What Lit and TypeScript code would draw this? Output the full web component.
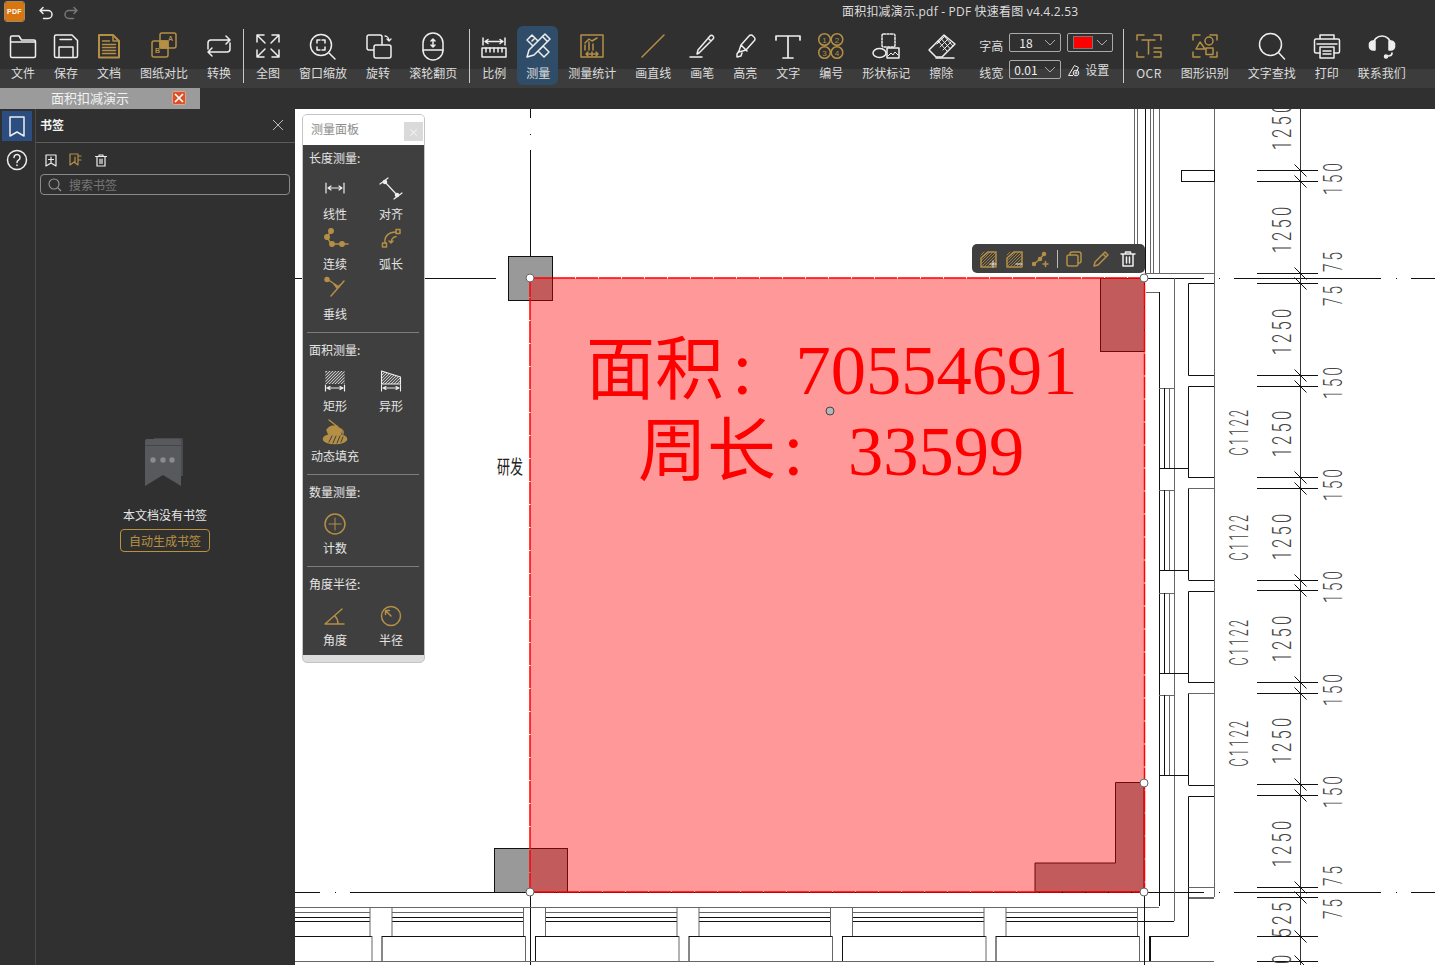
import { LitElement, html, svg, css } from "lit";
import { customElement } from "lit/decorators.js";

const ic = (content: unknown, cls = "w", size = 32) =>
  html`<svg class="ico ${cls}" width=${size} height=${size} viewBox="0 0 ${size} ${size}" fill="none" stroke="currentColor" stroke-width="1.5" stroke-linecap="round" stroke-linejoin="round">${content}</svg>`;

const hatch = (x: number, y: number, w: number, h: number, step = 3) => {
  const out: string[] = [];
  for (let i = step; i < w + h; i += step) {
    const x1 = x + Math.max(0, i - h), y1 = y + Math.min(i, h);
    const x2 = x + Math.min(i, w), y2 = y + Math.max(0, i - w);
    out.push(`M${x1} ${y1}L${x2} ${y2}`);
  }
  return out.join("");
};

const I = {
  folder: svg`<path d="M5 6h7l2.500 4H27a1.500 1.500 0 0 1 1.500 1.500V26a1.500 1.500 0 0 1-1.500 1.500H5A1.500 1.500 0 0 1 3.500 26V7.500A1.500 1.500 0 0 1 5 6zM3.500 12H28.500"/>`,
  save: svg`<path d="M6 5h16l5.500 5.500V26a1.500 1.500 0 0 1-1.500 1.500H6A1.500 1.500 0 0 1 4.500 26V6.500A1.500 1.500 0 0 1 6 5zM10 9.500h11.500M9 27V17h14v10"/>`,
  doc: svg`<path stroke-width="2" d="M6 5h14l6 6v16.500H6z"/><path d="M20 5v6h6M9.500 11h7M9.500 14.500h13M9.500 17.500h13M9.500 20.500h13M9.500 23.500h13"/>`,
  compare: svg`<rect x="12" y="3" width="16" height="15" rx="2"/><rect x="4" y="11" width="16" height="16" rx="2"/><rect x="12" y="11" width="8" height="7" fill="currentColor"/><text x="20" y="11" class="mini">A</text><text x="7" y="23" class="mini">B</text>`,
  convert: svg`<path d="M5 19v-6a3 3 0 0 1 3-3h19M23 6l4 4-4 4M27 13v6a3 3 0 0 1-3 3H5M9 18l-4 4 4 4"/>`,
  full: svg`<path d="M5 12V5h7M5 5l8 8M27 12V5h-7M27 5l-8 8M5 20v7h7M5 27l8-8M27 20v7h-7M27 27l-8-8"/>`,
  zoomWin: svg`<circle cx="14" cy="15" r="10.500"/><path d="M22 23l6 6M10 13v-3h3M15 10h3v3M18 17v3h-3M13 20h-3v-3"/>`,
  rotate: svg`<rect x="5" y="5" width="15" height="15" rx="2"/><rect x="12" y="15" width="17" height="13" rx="2" fill="#303030"/><path d="M23 6c2 0 4 2 4 5M25 9l2 2 2-2" stroke-width="1.300"/>`,
  wheel: svg`<rect x="6" y="3" width="20" height="27" rx="10"/><path d="M6 20h20M16 9v8M14 11l2-2 2 2M14 15l2 2 2-2"/>`,
  scale: svg`<path d="M5 8v7M27 8v7M7 11.500h18M10 9.500l-3 2 3 2M22 9.500l3 2-3 2"/><rect x="4" y="18" width="24" height="9"/><path d="M8 18v4M12 18v4M16 18v4M20 18v4M24 18v4" />`,
  measure: svg`<path d="M5 10l5-5 17 17-5 5zM10 11l2-2M14 15l2-2M18 19l2-2"/><path fill="#2f4d68" d="M23 4l5 5-16 16-7 2 2-7z"/><path d="M20.500 6.500l5 5"/>`,
  stats: svg`<rect x="5" y="5" width="22" height="22"/><path d="M9 15v5M13 12v8M17 14v6M9 13l4-4 3 2 5-3M10 24h12M12 22l-2 2 2 2M20 22l2 2-2 2M16 22v4"/>`,
  line: svg`<path d="M5 27L27 5"/>`,
  pen: svg`<path d="M13 23l-2 1 1-4L24 6a2 2 0 0 1 3 0v0a2 2 0 0 1 0 3zM22 8l3 3M4 27h12"/>`,
  hl: svg`<path d="M10 21l2-6 8-9a2.500 2.500 0 0 1 4 0l1 1a2.500 2.500 0 0 1 0 4l-8 9-7 2zM12 15l6 6M10 21l-2 3v3l4-1 1-3"/>`,
  text: svg`<path d="M4 10V6h24v4M16 6v22M11 28h10" stroke-width="1.700"/>`,
  number: svg`<circle cx="9.500" cy="9.500" r="5.800"/><circle cx="22" cy="9.500" r="5.800"/><circle cx="9.500" cy="22.500" r="5.800"/><circle cx="22" cy="22.500" r="5.800"/><text class="dg" x="9.500" y="12.500">1</text><text class="dg" x="22" y="12.500">2</text><text class="dg" x="9.500" y="25.500">3</text><text class="dg" x="22" y="25.500">4</text>`,
  shape: svg`<rect x="12" y="4" width="13" height="13" rx="1.500" stroke-dasharray="2 1.500"/><ellipse cx="9.500" cy="23" rx="6.500" ry="4.500"/><rect x="17" y="18" width="12" height="10"/><path d="M18 26l3-3 2 2 2-3 3 3" stroke-width="1"/>`,
  eraser: svg`<path d="M4 20L19 5l11 9-13 13H11z"/><path d="M13 11l9 10M16 8.500l9 10M19 6l9 10M12 14l8-8M15 17l8-8M18 20l8-8" stroke-width="1"/><path d="M11 28h18"/>`,
  ocr: svg`<path d="M4 10V5h7M21 5h7v5M4 22v5h7M21 27h7v-5M9 10h13M15.500 10v14M21 18h7M21 22h7"/>`,
  recog: svg`<path d="M4 10V5h7M21 5h7v5M4 22v5h7M21 27h7v-5"/><circle cx="20" cy="11" r="4"/><path d="M11 12l5 7H7z"/><rect x="17" y="18" width="7" height="6.500"/>`,
  search: svg`<circle cx="14.500" cy="14.500" r="11"/><path d="M22.500 22.500l6 6.500"/>`,
  print: svg`<path d="M9 9V5h14v4M9 23H5a1.500 1.500 0 0 1-1.500-1.500v-11A1.500 1.500 0 0 1 5 9h22a1.500 1.500 0 0 1 1.500 1.500v11A1.500 1.500 0 0 1 27 23h-4"/><rect x="9" y="17" width="14" height="11"/><path d="M6 14h20M12 21h8M12 24h8"/>`,
  headset: svg`<path d="M7 15a9 9 0 0 1 18 0M22 26c2 0 4-1 4-3" stroke-width="1.700"/><path d="M9 11v9H7a3.500 3.500 0 0 1-3.500-4.500A3.500 3.500 0 0 1 7 11zM23 11v9h2a3.500 3.500 0 0 0 3.500-4.500A3.500 3.500 0 0 0 25 11z" fill="currentColor"/><circle cx="20" cy="26.500" r="1.500" fill="currentColor"/>`,
  linear: svg`<path d="M5 7v10M23 7v10M7 12h14M10 10l-3 2 3 2M18 10l3 2-3 2" stroke-width="1.200"/>`,
  aligned: svg`<path d="M3 8l8-6M17 23l8-6M7 5l14 15" stroke-width="1.200"/><circle cx="8" cy="6" r="1.500" fill="currentColor"/><circle cx="20" cy="19" r="1.500" fill="currentColor"/>`,
  chain: svg`<path d="M10 5L6 11l4 7 9 0 8 0"/><circle cx="10" cy="5" r="2.200" fill="currentColor"/><circle cx="6" cy="11" r="2.200" fill="currentColor"/><circle cx="11" cy="18" r="2.200" fill="currentColor"/><circle cx="21" cy="18" r="2.200" fill="currentColor"/>`,
  arc: svg`<path d="M8 17C7 10 12 6 19 6M14 17c0-3 2-6 5-6.500M12 15l2 2 2-2"/><rect x="5.500" y="17" width="4" height="4"/><rect x="19" y="3.500" width="4" height="4"/>`,
  perp: svg`<path d="M6 3l12 8M23 5L10 20M13 8l3 4 3-3"/><circle cx="6" cy="3.500" r="2" fill="currentColor"/>`,
  rectA: svg`<rect x="4.500" y="3" width="19" height="13" fill="#ddd" stroke="none"/><path d="${hatch(4.5, 3, 19, 13)}" stroke="#3f3f3f" stroke-width="1.200"/><path d="M4.500 17v6M23.500 17v6M6 20h16M9 18.500l-3 1.500 3 1.500M19 18.500l3 1.500-3 1.500" stroke-width="1.200"/>`,
  irregular: svg`<path d="M4.500 3l19 6v7h-19z" fill="#ddd" stroke="none"/><path d="${hatch(4.5, 3, 19, 13)}" stroke="#3f3f3f" stroke-width="1.200"/><path d="M4.500 3l19 6v7h-19zM4.500 17v6M23.500 17v6M6 20h16M9 18.500l-3 1.500 3 1.500M19 18.500l3 1.500-3 1.500" stroke-width="1.100"/>`,
  fill: svg`<path d="M8 2l9 7M6 12c2-3 5-4 8-4l7 4-2 5H8z" fill="currentColor"/><path d="M22 13v3" /><ellipse cx="14" cy="21" rx="11.500" ry="4.500" fill="currentColor"/><path d="M8 24l3-6M12 25l3-7M16 25l3-7M20 24l2-5" stroke="#3f3f3f" stroke-width="1"/>`,
  count: svg`<circle cx="14" cy="14" r="10"/><path d="M14 8v12M8 14h12" stroke-width="1"/>`,
  angle: svg`<path d="M4 22h19M4 22L21 7M14 14c2 2 3 5 3 8"/>`,
  radius: svg`<circle cx="14" cy="14" r="9.500"/><path d="M14 14L8.500 8.500M8.500 12.500v-4h4"/>`,
};

type Item = { l: string; i: unknown; g?: boolean; a?: boolean };
const G1: Item[] = [
  { l: "文件", i: I.folder }, { l: "保存", i: I.save }, { l: "文档", i: I.doc, g: true },
  { l: "图纸对比", i: I.compare, g: true }, { l: "转换", i: I.convert },
];
const G2: Item[] = [
  { l: "全图", i: I.full }, { l: "窗口缩放", i: I.zoomWin }, { l: "旋转", i: I.rotate }, { l: "滚轮翻页", i: I.wheel },
];
const G3: Item[] = [
  { l: "比例", i: I.scale }, { l: "测量", i: I.measure, a: true }, { l: "测量统计", i: I.stats, g: true },
  { l: "画直线", i: I.line, g: true }, { l: "画笔", i: I.pen }, { l: "高亮", i: I.hl }, { l: "文字", i: I.text },
  { l: "编号", i: I.number, g: true }, { l: "形状标记", i: I.shape }, { l: "擦除", i: I.eraser },
];
const G4: Item[] = [
  { l: "OCR", i: I.ocr, g: true }, { l: "图形识别", i: I.recog, g: true }, { l: "文字查找", i: I.search },
  { l: "打印", i: I.print }, { l: "联系我们", i: I.headset },
];

type Tool = { l: string; i: unknown; g?: boolean };
const PANEL: { h: string; items: Tool[] }[] = [
  { h: "长度测量:", items: [{ l: "线性", i: I.linear }, { l: "对齐", i: I.aligned }, { l: "连续", i: I.chain, g: true }, { l: "弧长", i: I.arc, g: true }, { l: "垂线", i: I.perp, g: true }] },
  { h: "面积测量:", items: [{ l: "矩形", i: I.rectA }, { l: "异形", i: I.irregular }, { l: "动态填充", i: I.fill, g: true }] },
  { h: "数量测量:", items: [{ l: "计数", i: I.count, g: true }] },
  { h: "角度半径:", items: [{ l: "角度", i: I.angle, g: true }, { l: "半径", i: I.radius, g: true }] },
];

@customElement("cad-sheet")
class CadSheet extends LitElement {
  static styles = css`
    :host { display: block; width: 100%; height: 100%; background: #fff; overflow: hidden; }
    svg { display: block; }
    .cad { font-family: "Roboto", "Liberation Sans", sans-serif; font-weight: 300; font-size: 26px; fill: #444; text-anchor: middle; letter-spacing: 5px; }
    .big { font-family: "Liberation Serif", "Noto Sans CJK SC", serif; font-size: 70.500px; fill: #ff0000; }
    .big .cj { font-size: 69px; }
    .big .co { font-size: 75px; }
    .lab { font-family: "Noto Sans CJK SC", sans-serif; font-size: 13px; fill: #222; }
  `;
  render() {
    const K = "#111", M = "#666";
    const L = (x1: number, y1: number, x2: number, y2: number, c = K) =>
      svg`<line x1=${x1} y1=${y1} x2=${x2} y2=${y2} stroke=${c} stroke-width="1"/>`;
    const P = 102.4;
    const lines: unknown[] = [];
    // dash-dot axes
    lines.push(L(530.5, 109, 530.5, 118), L(530.5, 134, 530.5, 135), L(530.5, 150, 530.5, 278));
    lines.push(L(530.5, 892, 530.5, 965));
    lines.push(L(295, 278.5, 496, 278.5), L(511, 278.5, 512, 278.5));
    lines.push(L(295, 892.5, 320, 892.5), L(335, 892.5, 336, 892.5), L(350, 892.5, 1144, 892.5));
    for (const y of [278.5, 892.5]) {
      lines.push(L(1147, y, 1204, y), L(1219, y, 1220, y), L(1234, y, 1381, y), L(1396, y, 1397, y), L(1411, y, 1435, y));
    }
    // upper wall
    lines.push(L(1134.5, 109, 1134.5, 273, M), L(1137.5, 109, 1137.5, 273, M), L(1145.5, 109, 1145.5, 278), L(1150.5, 109, 1150.5, 273, M), L(1153.5, 109, 1153.5, 273, M), L(1159.5, 109, 1159.5, 273, M));
    lines.push(L(1145, 273.5, 1214, 273.5, M), L(1214.5, 109, 1214.5, 897, M));
    lines.push(svg`<rect x="1181.5" y="170.500" width="33" height="11" fill="#fff" stroke=${K}/>`);
    // right wall column
    lines.push(L(1146, 292.5, 1159, 292.5, M), L(1159.5, 292, 1159.5, 906, K), L(1174.5, 278, 1174.5, 921, M));
    lines.push(L(1188.5, 283.5, 1188.5, 375.5), L(1188.5, 283.5, 1214, 283.5));
    for (let i = 0; i < 6; i++) {
      const y0 = Math.round(375 + P * i) + 0.5;
      lines.push(L(1188.5, y0, 1214, y0), L(1188.5, y0 + 11, 1214, y0 + 11, i % 2 ? M : K));
      if (i < 5) lines.push(L(1188.5, y0 + 11, 1188.5, y0 + P));
      else lines.push(L(1188.5, y0 + 11, 1188.5, 887.5), L(1188.5, 887.5, 1214, 887.5, M));
    }
    for (let i = 0; i < 4; i++) {
      const y0 = Math.round(375 + P * i);
      lines.push(L(1159, y0 + 13.5, 1174, y0 + 13.5, M), L(1159, y0 + 93.5, 1188, y0 + 93.5), L(1164.5, y0 + 13, 1164.5, y0 + 93), L(1169.5, y0 + 13, 1169.5, y0 + 93, M));
    }
    // bottom wall
    lines.push(L(1188.5, 897.5, 1214, 897.5, M), L(1188.5, 897, 1188.5, 936.5), L(1150, 936.5, 1188, 936.5), L(1150.5, 936, 1150.5, 961), L(295, 961.5, 1214, 961.5, M));
    lines.push(L(295, 907.5, 1159, 907.5, M), L(1144.5, 892, 1144.5, 965));
    const cols = [370, 523.5, 677, 830.5, 984, 1137.5];
    const segs: [number, number][] = [[295, 370], [392, 523.5], [545.5, 677], [699, 830.5], [852.5, 984], [1006, 1137.5]];
    for (const [a, b] of segs) {
      lines.push(L(a, 912.5, b, 912.5, M), L(a, 917.5, b, 917.5));
      lines.push(L(a, 921.5, b === 1137.5 ? 1174 : b, 921.5));
    }
    let prev = 295;
    for (const c of cols) {
      lines.push(L(prev, 936.5, c + 2, 936.5));
      prev = c + 12;
      lines.push(L(c, 907, c, 936, M), L(c + 2, 936, c + 2, 961, M), L(c + 12, 936, c + 12, 961));
      if (c < 1137) lines.push(L(c + 22, 907, c + 22, 936, M));
    }
    // dimension chain
    lines.push(L(1300.5, 109, 1300.5, 965, "#333"));
    const ticks = [170.5, 181.5, 273.5, 283.5, 375.5, 386.5, 477.5, 488.5, 580.5, 590.5, 682.5, 693.5, 784.5, 795.5, 887.5, 897.5, 936.5, 961.5];
    for (const y of ticks) {
      lines.push(L(1257, y, 1318, y), L(1294.5, y - 6, 1306.5, y + 6));
    }
    const T = (t: string, x: number, y: number, sx: number) =>
      svg`<text class="cad" transform="translate(${x} ${y - 1.5}) rotate(-90) scale(${sx} 1)">${t}</text>`;
    const labels = [
      ...[127, 230, 332, 434, 537, 639, 741, 844, 978].map((y) => T("1250", 1291, y, 0.64)),
      T("525", 1291, 920, 0.66),
      ...[179, 383, 485, 587, 690, 792].map((y) => T("150", 1342, y, 0.6)),
      ...[262, 296, 876, 909].map((y) => T("75", 1342, y, 0.59)),
      ...[433, 538, 643, 744].map((y) => T("C1122", 1248, y, 0.48)),
    ];
    const handles: [number, number][] = [[530, 278], [1144, 278], [1144, 783], [1144, 892], [530, 892]];
    return html`<svg width="1140" height="856" viewBox="295 109 1140 856">
      ${lines}
      ${labels}
      <text class="lab" transform="translate(497 474) scale(1 1.500)">研发</text>
      <rect x="508.500" y="256.500" width="44" height="44" fill="#999" stroke="#111"/>
      <rect x="494.500" y="848.500" width="73" height="44" fill="#999" stroke="#111"/>
      <rect x="1100.500" y="278.500" width="44" height="73" fill="#999" stroke="#111"/>
      <path d="M1115.500 782.500H1144V892H1035V863H1115.500z" fill="#999" stroke="#111"/>
      <rect x="530" y="278" width="614.500" height="614" fill="#ff0000" fill-opacity="0.4"/>
      <rect x="530" y="278" width="614.500" height="614" fill="none" stroke="#ff0000" stroke-width="1.500" stroke-dasharray="22 1"/>
      <text class="big" y="394"><tspan class="cj" x="586">面积</tspan><tspan class="co" x="732">:</tspan><tspan x="795.500">70554691</tspan></text>
      <text class="big" y="475"><tspan class="cj" x="638">周长</tspan><tspan class="co" x="783">:</tspan><tspan x="848">33599</tspan></text>
      ${handles.map(([x, y]) => svg`<circle cx=${x} cy=${y} r="4" fill="#fff" stroke="#666" stroke-width="1"/>`)}
      <circle cx="830" cy="411" r="4" fill="#b5b5b5" stroke="#444" stroke-width="1"/>
    </svg>`;
  }
}

@customElement("app-root")
export class AppRoot extends LitElement {
  static styles = css`
    :host { display: block; width: 100%; height: 100vh; overflow: hidden; background: #303030; color: #ddd;
      font-family: "Noto Sans CJK SC", "Liberation Sans", sans-serif; font-size: 12px; }
    .app { display: flex; flex-direction: column; height: 100%; }
    .ico { display: block; flex: none; }
    .w { color: #eeeeee; }
    .g { color: #b48f45; }
    .mini { font: bold 7px "Liberation Sans", sans-serif; fill: currentColor; stroke: none; }
    .dg { font: 8px "Liberation Sans", sans-serif; fill: currentColor; stroke: none; text-anchor: middle; }

    .title { height: 27px; display: flex; align-items: center; flex: none; position: relative; z-index: 1; }
    .logo { margin-left: 5px; width: 19px; height: 19px; border-radius: 2px; background: #d9750f; outline: 1px solid #9a8a70;
      color: #fff; font: bold 7px "Liberation Sans", sans-serif; display: flex; align-items: center; justify-content: center; letter-spacing: 0.300px; margin-top: -4px; }
    .undo { margin-left: 15px; margin-top: -2px; }
    .redo { margin-left: 11px; margin-top: -2px; color: #777; }
    .ttl { margin-left: 764px; margin-top: -3px; color: #ddd; font-family: "Open Sans", "Noto Sans CJK SC", sans-serif; font-size: 12px; line-height: 16px; letter-spacing: 0.200px; white-space: nowrap; }

    .bar { height: 61px; flex: none; display: flex; padding-left: 11px; background: linear-gradient(#303030 0 42px, #3c3c3c 42px); }
    .grp { display: flex; gap: 19px; }
    .sep { width: 1px; height: 54px; margin: 2px 12px 0; background: #c8c8c8; flex: none; }
    .sep.tight { margin-left: 10px; }
    .it { position: relative; display: flex; flex-direction: column; align-items: center; padding-top: 3px; }
    .it .ico { margin: 0 -8px; position: relative; }
    .it span { margin-top: 3px; line-height: 16px; white-space: nowrap; color: #dcdcdc; position: relative; }
    .it.on { margin-left: 1px; margin-right: -1px; }
    .it.on::before { content: ""; position: absolute; left: -9px; right: -8px; top: -1px; height: 59px; background: #2f4d68; border-radius: 6px; }
    .last .it:first-child span { letter-spacing: 0.400px; }
    .form { margin-left: 26px; padding-top: 6px; display: grid; grid-template-columns: 24px 52px 46px; column-gap: 6px; row-gap: 8px; grid-auto-rows: 19px; align-items: center; }
    .form .lb { line-height: 16px; margin-top: 6px; }
    .sel { height: 19px; box-sizing: border-box; border: 1px solid #aaa; border-radius: 2px; display: flex; align-items: center; justify-content: space-between; padding: 0 3px 0 9px; line-height: 17px; color: #eee; }
    .sel.n { padding-left: 4px; }
    .sel svg { flex: none; }
    .clr { padding: 0 3px 0 5px; }
    .swatch { width: 20px; height: 13px; background: #ff0000; border: 1px solid #777; box-sizing: border-box; }
    .set { display: flex; align-items: center; gap: 4px; color: #dcdcdc; white-space: nowrap; }

    .tabs { height: 21px; flex: none; display: flex; }
    .tab { width: 200px; box-sizing: border-box; background: #9b9b9b; display: flex; align-items: center; justify-content: space-between; padding: 0 14px 2px 51px; color: #f2f2f2; font-size: 13px; line-height: 18px; }
    .tab i { width: 14px; height: 14px; box-sizing: border-box; background: #d8532a; border: 1px solid #e9a08a; border-radius: 2px; display: flex; align-items: center; justify-content: center; }

    .main { flex: 1; min-height: 0; display: flex; }
    .rail { width: 35px; flex: none; box-sizing: content-box; border-right: 1px solid #4a4a4a; padding-top: 2px; display: flex; flex-direction: column; align-items: flex-start; gap: 4px; }
    .rb { width: 30px; height: 30px; margin-left: 2px; display: flex; align-items: center; justify-content: center; }
    .rb.on { background: #2b4d7f; }
    .side { width: 259px; flex: none; display: flex; flex-direction: column; }
    .sh { flex: none; box-sizing: border-box; height: 34px; border-bottom: 1px solid #5c5c5c; display: flex; align-items: center; justify-content: space-between; padding: 0 11px 2px 4px; font-weight: 700; color: #f2f2f2; }
    .st { height: 31px; flex: none; display: flex; align-items: center; gap: 10px; padding: 3px 0 0 8px; box-sizing: border-box; }
    .sr { margin: 0 5px 0 4px; height: 21px; flex: none; box-sizing: border-box; border: 1px solid #8a8a8a; border-radius: 4px; display: flex; align-items: center; gap: 7px; padding-left: 7px; color: #777; }
    .empty { margin-top: 242px; display: flex; flex-direction: column; align-items: center; padding-right: 1px; }
    .empty p { margin: 19px 0 0; line-height: 18px; color: #e6e6e6; }
    .btn { margin-top: 5px; width: 90px; height: 23px; box-sizing: border-box; border: 1px solid #b8923f; border-radius: 4px; color: #b8923f; display: flex; align-items: center; justify-content: center; }

    .view { flex: 1; min-width: 0; position: relative; }
    .panel { position: absolute; left: 7px; top: 5px; width: 123px; height: 549px; box-sizing: border-box; border: 1px solid #c4c4c4; border-radius: 5px; background: #dcdcdc; overflow: hidden; }
    .ph { height: 30px; background: #fff; display: flex; align-items: center; justify-content: space-between; padding: 0 1px 3px 8px; box-sizing: border-box; color: #8c8c8c; }
    .ph i { width: 19px; height: 19px; margin-top: 6px; background: #dadada; color: #f5f5f5; font-style: normal; font-size: 11px; display: flex; align-items: center; justify-content: center; }
    .pb { background: #3f3f3f; height: 510px; padding: 0 5px 0 4px; box-sizing: border-box; }
    .ps + .ps { border-top: 1px solid #7d7d7d; margin-top: 9px; padding-top: 4px; }
    .ps h4 { margin: 0 0 2px; font-weight: 400; font-size: 12px; line-height: 26px; padding-left: 2px; color: #e4e4e4; }
    .pg { display: grid; grid-template-columns: 56px 56px; grid-auto-rows: 50px; }
    .pi { display: flex; flex-direction: column; align-items: center; color: #e4e4e4; }
    .pi .ico { margin-top: 3px; }
    .pi span { line-height: 19px; white-space: nowrap; }

    .float { position: absolute; left: 677px; top: 135px; width: 173px; height: 29px; background: #3f3f3f; border-radius: 5px; display: flex; align-items: center; padding-left: 7px; box-sizing: border-box; gap: 8px; }
    .float .ico:nth-last-child(-n+2) { margin-left: 1px; }
    .float .sp { width: 1px; height: 18px; background: #bbb; margin: 0 -1px 0 0; }
  `;

  private item(it: Item) {
    return html`<div class="it ${it.a ? "on" : ""}">${ic(it.i, it.g ? "g" : "w")}<span>${it.l}</span></div>`;
  }
  private chevron() {
    return html`<svg width="14" height="8" viewBox="0 0 14 8" fill="none" stroke="#aaa" stroke-width="1"><path d="M2 1l5 5 5-5"/></svg>`;
  }

  render() {
    const fg = "g";
    return html`<div class="app">
      <div class="title">
        <div class="logo">PDF</div>
        ${ic(svg`<path d="M4 1.500L1 4.500l3 3M1.500 4.500H9a4 4 0 0 1 0 8H4.500" />`, "undo w", 14)}
        ${ic(svg`<path d="M10 1.500l3 3-3 3M12.500 4.500H5a4 4 0 0 0 0 8h4.500" />`, "redo", 14)}
        <div class="ttl">面积扣减演示.pdf - PDF 快速看图 v4.4.2.53</div>
      </div>
      <div class="bar">
        <div class="grp">${G1.map((i) => this.item(i))}</div>
        <div class="sep"></div>
        <div class="grp">${G2.map((i) => this.item(i))}</div>
        <div class="sep"></div>
        <div class="grp">${G3.map((i) => this.item(i))}</div>
        <div class="form">
          <div class="lb">字高</div>
          <div class="sel"><span>18</span>${this.chevron()}</div>
          <div class="sel clr"><div class="swatch"></div>${this.chevron()}</div>
          <div class="lb">线宽</div>
          <div class="sel n"><span>0.01</span>${this.chevron()}</div>
          <div class="set">
            <svg class="ico w" width="14" height="14" viewBox="0 0 14 14" fill="none" stroke="currentColor" stroke-width="1"><path d="M1.500 12.500l6-10 4 2-2 4"/><circle cx="9" cy="10" r="2.800"/><circle cx="9" cy="10" r="1"/><path d="M1.500 12.500h4.500"/></svg>
            <span>设置</span>
          </div>
        </div>
        <div class="sep tight"></div>
        <div class="grp last">${G4.map((i) => this.item(i))}</div>
      </div>
      <div class="tabs">
        <div class="tab">面积扣减演示
          <i><svg width="10" height="10" viewBox="0 0 10 10" stroke="#fff" stroke-width="1.600"><path d="M1 1l8 8M9 1l-8 8"/></svg></i>
        </div>
      </div>
      <div class="main">
        <div class="rail">
          <div class="rb on">${ic(svg`<path d="M5 3h14v19l-7-4-7 4z"/>`, "w", 24)}</div>
          <div class="rb">${ic(svg`<circle cx="12" cy="12" r="9.500"/><path d="M9 9.500a3 3 0 1 1 4.500 2.600c-1 .6-1.500 1.200-1.500 2.400M12 17v.5"/>`, "w", 24)}</div>
        </div>
        <div class="side">
          <div class="sh"><span>书签</span>
            <svg width="12" height="12" viewBox="0 0 12 12" stroke="#bbb" stroke-width="1"><path d="M1 1l10 10M11 1L1 11"/></svg>
          </div>
          <div class="st">
            ${ic(svg`<path d="M2 2h10v11l-5-3-5 3zM7 4v5M4.500 6.500h5" stroke-width="1.200"/>`, "w", 14)}
            ${ic(svg`<path d="M2 2h8v11l-4-3-4 3zM10 4h3M10 8h3M7 5v6" stroke-width="1.200"/>`, "g", 16)}
            ${ic(svg`<path d="M1.500 3.500h11M5 3.500V2h4v1.500M3 3.500V13h8V3.500M6 6v4.500M8 6v4.500" stroke-width="1.200"/>`, "w", 14)}
          </div>
          <div class="sr">
            <svg width="14" height="14" viewBox="0 0 14 14" fill="none" stroke="#999" stroke-width="1.100"><circle cx="6" cy="6" r="5"/><path d="M10 10l3 3"/></svg>
            <span>搜索书签</span>
          </div>
          <div class="empty">
            <svg width="50" height="50" viewBox="-4 0 50 50">
              <path d="M10 1h27a2 2 0 0 1 2 2v36h-2V3H10z" fill="#4a4b4e"/>
              <path d="M3 0h32a2 2 0 0 1 2 2v45L19 36 1 47V2a2 2 0 0 1 2-2z" fill="#58595c" transform="translate(0 2)"/>
              <rect x="1" y="8" width="36" height="1" fill="#44454a"/>
              <circle cx="9" cy="23" r="2.700" fill="#8a8b8f"/><circle cx="19" cy="23" r="2.700" fill="#8a8b8f"/><circle cx="28" cy="23" r="2.700" fill="#8a8b8f"/>
            </svg>
            <p>本文档没有书签</p>
            <div class="btn">自动生成书签</div>
          </div>
        </div>
        <div class="view">
          <cad-sheet></cad-sheet>
          <div class="panel">
            <div class="ph"><span>测量面板</span><i>×</i></div>
            <div class="pb">
              ${PANEL.map((s) => html`<div class="ps">
                <h4>${s.h}</h4>
                <div class="pg">${s.items.map((t) => html`<div class="pi">${ic(t.i, t.g ? "g" : "w", 28)}<span>${t.l}</span></div>`)}</div>
              </div>`)}
            </div>
          </div>
          <div class="float">
            ${ic(svg`<path d="M2 17V8l7-6h8v15z"/><path d="${hatch(2, 2, 15, 15, 3)}" stroke-width=".8"/><path d="M11 14h6M14 11v6" stroke="#eee" stroke-width="1"/>`, fg, 18)}
            ${ic(svg`<path d="M2 17V8l7-6h8v15z"/><path d="${hatch(2, 2, 15, 15, 3)}" stroke-width=".8"/><path d="M11 14h6" stroke="#eee" stroke-width="1"/>`, fg, 18)}
            ${ic(svg`<path d="M3 14L9 9l4-5"/><circle cx="3" cy="14" r="1.500" fill="currentColor"/><circle cx="9" cy="9" r="1.500" fill="currentColor"/><circle cx="13" cy="4" r="1.500" fill="currentColor"/><path d="M12 14h5M14.500 11.500v5"/>`, fg, 18)}
            <div class="sp"></div>
            ${ic(svg`<rect x="2" y="5" width="11" height="11" rx="2"/><path d="M5 5V4a2 2 0 0 1 2-2h7a2 2 0 0 1 2 2v7a2 2 0 0 1-2 2h-1"/>`, fg, 18)}
            ${ic(svg`<path d="M3 12L13 2l3 3L6 15l-4 1zM11 4l3 3"/>`, fg, 18)}
            ${ic(svg`<path d="M2 4h14M6.500 4V2h5v2M4 4v12h10V4M7.500 7v6M10.500 7v6"/>`, "w", 18)}
          </div>
        </div>
      </div>
    </div>`;
  }
}
